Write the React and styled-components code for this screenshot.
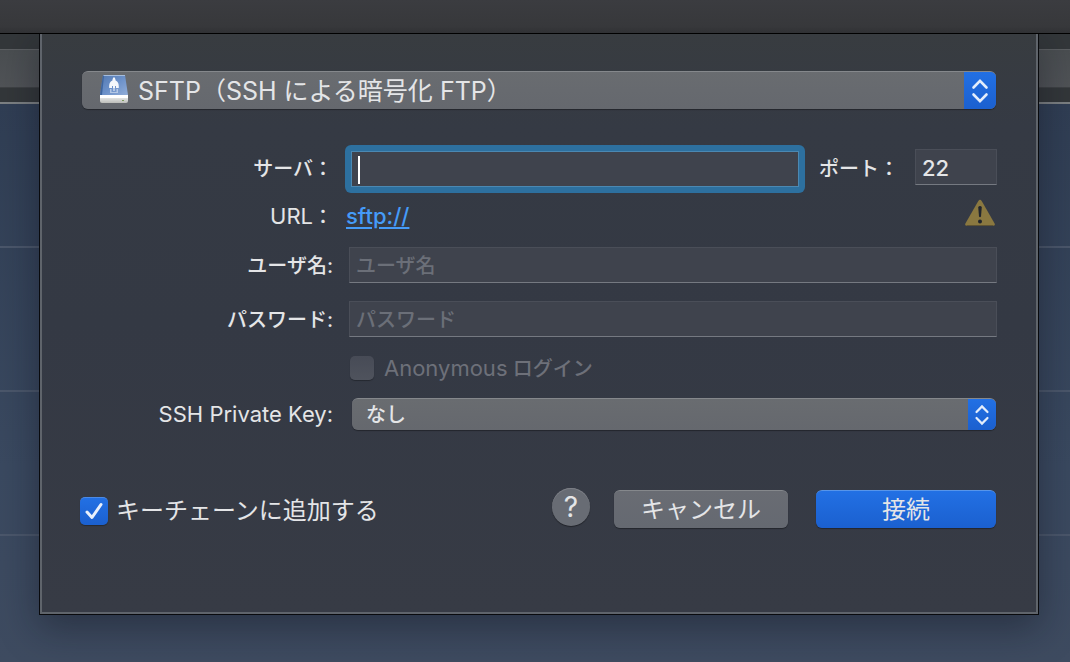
import React, { useState } from "react";
import styled, { createGlobalStyle } from "styled-components";

const GlobalStyle = createGlobalStyle`
  *, *::before, *::after { box-sizing: border-box; }
  body {
    margin: 0;
    background: #3b485c;
    color: #e4e5e7;
    font-family: Inter, "Noto Sans CJK JP", sans-serif;
    font-size: 20px;
    line-height: 24px;
  }
  input, select, button { font: inherit; color: inherit; margin: 0; }
`;

const Window = styled.div`
  min-height: 100vh;
  display: flex;
  flex-direction: column;
`;

const TitleBar = styled.header`
  height: 34px;
  background: linear-gradient(#3b3c40, #37383b 80%, #303134);
  border-bottom: 1px solid #000;
`;

const Stage = styled.main`
  flex: 1;
  display: grid;
  grid-template-columns: minmax(0, 1fr);
  overflow: hidden;

  > * { grid-area: 1 / 1; }
`;

const Browser = styled.div`
  display: flex;
  flex-direction: column;
`;

const ToolStrip = styled.div`
  height: 70px;
  padding: 15px 0 13px;
  background: #33373a;
  border-bottom: 2px solid #7c8083;
`;

const ToolBand = styled.div`
  height: 39px;
  background: linear-gradient(#4a4e51, #505357);
  border-top: 1px solid #5c5f62;
  border-bottom: 1px solid #3e4144;
`;

const FileList = styled.div`
  flex: 1;
  background: linear-gradient(#303e54, #3a4960 65%, #3e4b60);
`;

const FileRow = styled.div`
  height: 144px;
  border-bottom: 2px solid #4b576b;
`;

const Sheet = styled.form`
  position: relative;
  align-self: start;
  margin: 0 32px 48px 40px;
  padding: 37px 40px 84px;
  background: linear-gradient(#383c40, #353a44 16%, #343944 50%, #373b45);
  border: 2px solid #5f646b;
  border-top: 0;
  outline: 1px solid #090a0d;
  box-shadow: 0 12px 36px 2px rgba(12, 16, 26, 0.4);
`;

const SelectBox = styled.div`
  flex: 1;
  display: flex;
  align-items: center;
  height: ${(p) => (p.$large ? 38 : 32)}px;
  padding-left: ${(p) => (p.$large ? 18 : 14)}px;
  margin: ${(p) => (p.$large ? "0" : "0 1px 0 7px")};
  border-radius: 6px;
  overflow: hidden;
  background: linear-gradient(#696c70, #65686e);
  border-top: 1px solid #85888c;
  box-shadow: 0 1px 1px rgba(0, 0, 0, 0.35);
  font-size: ${(p) => (p.$large ? 25 : 20)}px;
  font-weight: ${(p) => (p.$large ? 400 : 500)};
  line-height: ${(p) => (p.$large ? 36 : 28)}px;
`;

const Select = styled.select`
  flex: 1;
  min-width: 0;
  padding: 0;
  border: 0;
  outline: 0;
  appearance: none;
  background: transparent;
`;

const SelectCap = styled.span`
  display: flex;
  align-items: center;
  justify-content: center;
  align-self: stretch;
  width: ${(p) => (p.$large ? 32 : 28)}px;
  margin-top: -1px;
  background: linear-gradient(#2270e4, #1b60cf);
  border-top: 1px solid #5795ea;
  pointer-events: none;
`;

const DriveSlot = styled.span`
  display: flex;
  margin: 0 10px 3px 0;
`;

const Fields = styled.div`
  display: grid;
  grid-template-columns: 251px minmax(0, 1fr);
  column-gap: 12px;
  align-items: center;
  margin: 36px -1px 0 0;
  font-weight: 500;
`;

const Label = styled.label`
  justify-self: end;
  white-space: nowrap;
`;

const FieldLabel = styled(Label)`
  padding-top: 2px;
`;

const Latin = styled.span`
  font-size: 22px;
  font-weight: 400;
`;

const Line = styled.div`
  display: flex;
  align-items: center;
  height: ${(p) => p.$height}px;
  padding-left: ${(p) => p.$inset || 0}px;
`;

const FocusRing = styled.div`
  position: relative;
  flex: 1;
  min-width: 0;
  height: 48px;
  padding: 6px;
  background: #2d709f;
  border-radius: 6px;
`;

const Caret = styled.span`
  position: absolute;
  left: 13px;
  top: 11px;
  width: 2px;
  height: 28px;
  background: #fff;
`;

const TextInput = styled.input`
  width: 100%;
  height: 36px;
  padding: 2px 6px 0;
  border: 1px solid #4a4e58;
  border-bottom: 1px solid #757981;
  border-radius: 0;
  outline: 0;
  background: #3f434d;

  &::placeholder { color: #6b6f78; opacity: 1; }
`;

const ServerInput = styled(TextInput)`
  display: block;
  border: 1px solid #4b88b2;
`;

const PortLabel = styled.label`
  margin-left: 14px;
  white-space: nowrap;
`;

const PortInput = styled(TextInput)`
  align-self: flex-start;
  width: 82px;
  margin: 4px 0 0 16px;
  font-size: 22px;
`;

const UrlLink = styled.a`
  margin-left: 1px;
  color: #459bf8;
  font-size: 22px;
  text-underline-offset: 3px;
  text-decoration-thickness: 2px;
`;

const WarningSlot = styled.span`
  display: flex;
  align-self: flex-start;
  margin: 6px 2px 0 auto;
`;

const CheckLabel = styled.label`
  display: flex;
  align-items: center;
  gap: ${(p) => (p.$large ? 8 : 10)}px;
  padding-top: ${(p) => (p.$large ? 4 : 0)}px;
  font-size: ${(p) => (p.$large ? 24 : 20)}px;
  white-space: nowrap;
  color: ${(p) => (p.$dim ? "#6d7079" : "inherit")};
`;

const Check = styled.input`
  appearance: none;
  flex: none;
  width: ${(p) => (p.$large ? 28 : 24)}px;
  height: ${(p) => (p.$large ? 28 : 24)}px;
  border-radius: 5px;
  background: linear-gradient(#474b56, #4f535d);
  box-shadow: 0 1px 1px rgba(0, 0, 0, 0.3);

  &:checked {
    background: linear-gradient(#2270e4, #1b60cf);
    border-top: 1px solid #4c8ae6;
  }
`;

const CheckFrame = styled.span`
  display: grid;
  place-items: center;
  > * { grid-area: 1 / 1; }
  svg { pointer-events: none; }
`;

const Footer = styled.footer`
  display: flex;
  align-items: center;
  margin: 51px 0 0 -2px;
`;

const Button = styled.button`
  height: 38px;
  width: ${(p) => (p.$primary ? 180 : 174)}px;
  margin-left: ${(p) => (p.$primary ? 28 : 24)}px;
  padding: 0;
  border: 0;
  border-top: 1px solid ${(p) => (p.$primary ? "#5795ea" : "#85888c")};
  border-radius: 6px;
  background: ${(p) =>
    p.$primary ? "linear-gradient(#2270e4, #1b60cf)" : "linear-gradient(#696c73, #656971)"};
  box-shadow: 0 1px 1px rgba(0, 0, 0, 0.35);
  font-size: 24px;
`;

const HelpButton = styled.button`
  width: 38px;
  height: 38px;
  margin: -4px 0 0 auto;
  padding: 0;
  border: 0;
  border-radius: 50%;
  background: #686c74;
  box-shadow: 0 1px 1px rgba(0, 0, 0, 0.4), inset 0 1px 0 #7c7f86;
  font-size: 28px;
`;

function Chevrons({ large }) {
  return (
    <svg width={large ? 18 : 16} height={large ? 26 : 22} viewBox="0 0 18 26" fill="none"
      stroke="#e3edfb" strokeWidth="2.6" strokeLinecap="round" strokeLinejoin="miter" aria-hidden="true">
      <path d="M2.500 9.500 9 2.800l6.500 6.700M2.500 16.500 9 23.200l6.500-6.700" />
    </svg>
  );
}

function DriveIcon() {
  return (
    <svg width="28" height="28" viewBox="0 1 28 28" aria-hidden="true">
      <defs>
        <linearGradient id="driveTop" x1="0" y1="0" x2="1" y2="1">
          <stop offset="0" stopColor="#5278b0" />
          <stop offset="0.5" stopColor="#6c91c9" />
          <stop offset="1" stopColor="#94afd9" />
        </linearGradient>
        <linearGradient id="driveFront" x1="0" y1="0" x2="0" y2="1">
          <stop offset="0" stopColor="#fafafa" />
          <stop offset="1" stopColor="#bcbdb9" />
        </linearGradient>
      </defs>
      <path d="M3 1h22l3 20v1H0v-1z" fill="url(#driveTop)" />
      <path d="M3 1h22v1H3z" fill="#a5bddd" />
      <path d="M3 1 0 21h2L4 2z" fill="#3e659e" />
      <path d="M14 3c1 1 1.500 2 1.600 3.500C18 7.500 19 9.500 18.800 14H16v-2h-1v2h-2v-2h-1v2H9.200C9 9.500 10 7.500 12.400 6.500 12.500 5 13 4 14 3z" fill="#f4f7fb" />
      <path d="M10 15h1.500v3h5v-3H18v4h-8zM13 14h2v3h-2z" fill="#d5e0f1" opacity=".65" />
      <path d="M0 21h28v6q0 2-2 2H2q-2 0-2-2z" fill="url(#driveFront)" />
      <path d="M0 21h28v3H0z" fill="#fff" />
      <path d="M22 26h2v1h-2z" fill="#7b995c" />
    </svg>
  );
}

function WarningIcon() {
  return (
    <svg width="30" height="28" viewBox="0 0 30 28" role="img" aria-label="警告">
      <path d="M13.300 2q1.700-2.600 3.400 0L29.600 24.500q.8 2.500-1.500 2.500H1.900Q-.4 27 .4 24.500z" fill="#8a7840" />
      <path d="M1.500 26.500h27" stroke="#5e5334" strokeWidth="1" />
      <path d="M13.200 8q1.800-1.800 3.600 0l-.8 9.500q-1 1.400-2 0z" fill="#21252d" />
      <circle cx="15" cy="22.500" r="2" fill="#21252d" />
    </svg>
  );
}

export default function App() {
  const [saved, setSaved] = useState(true);
  return (
    <>
      <GlobalStyle />
      <Window>
        <TitleBar />
        <Stage>
          <Browser aria-hidden="true">
            <ToolStrip><ToolBand /></ToolStrip>
            <FileList>
              <FileRow />
              <FileRow />
              <FileRow />
            </FileList>
          </Browser>

          <Sheet onSubmit={(e) => e.preventDefault()}>
            <SelectBox $large>
              <DriveSlot><DriveIcon /></DriveSlot>
              <Select aria-label="プロトコル">
                <option>SFTP（SSH による暗号化 FTP）</option>
              </Select>
              <SelectCap $large><Chevrons large /></SelectCap>
            </SelectBox>

            <Fields>
              <Label htmlFor="server">サーバ：</Label>
              <Line $height={48}>
                <FocusRing>
                  <ServerInput id="server" type="text" />
                  <Caret />
                </FocusRing>
                <PortLabel htmlFor="port">ポート：</PortLabel>
                <PortInput id="port" type="text" defaultValue="22" />
              </Line>

              <Label as="span"><Latin>URL</Latin>：</Label>
              <Line $height={46}>
                <UrlLink href="sftp://">sftp://</UrlLink>
                <WarningSlot><WarningIcon /></WarningSlot>
              </Line>

              <FieldLabel htmlFor="user">ユーザ名:</FieldLabel>
              <Line $height={52} $inset={4}>
                <TextInput id="user" type="text" placeholder="ユーザ名" />
              </Line>

              <FieldLabel htmlFor="password">パスワード:</FieldLabel>
              <Line $height={56} $inset={4}>
                <TextInput id="password" type="password" placeholder="パスワード" />
              </Line>

              <span />
              <Line $height={42} $inset={5}>
                <CheckLabel $dim>
                  <Check type="checkbox" disabled />
                  <span><Latin>Anonymous</Latin> ログイン</span>
                </CheckLabel>
              </Line>

              <Label htmlFor="key"><Latin>SSH Private Key:</Latin></Label>
              <Line $height={50}>
                <SelectBox>
                  <Select id="key">
                    <option>なし</option>
                  </Select>
                  <SelectCap><Chevrons /></SelectCap>
                </SelectBox>
              </Line>
            </Fields>

            <Footer>
              <CheckLabel $large>
                <CheckFrame>
                  <Check $large type="checkbox" checked={saved} onChange={(e) => setSaved(e.target.checked)} />
                  {saved && (
                    <svg width="20" height="20" viewBox="0 0 20 20" fill="none" stroke="#e8f0fc"
                      strokeWidth="3" strokeLinecap="round" strokeLinejoin="round" aria-hidden="true">
                      <path d="M3 11l5 5.500L17 3.500" />
                    </svg>
                  )}
                </CheckFrame>
                キーチェーンに追加する
              </CheckLabel>
              <HelpButton type="button" aria-label="ヘルプ">?</HelpButton>
              <Button type="button">キャンセル</Button>
              <Button type="submit" $primary>接続</Button>
            </Footer>
          </Sheet>
        </Stage>
      </Window>
    </>
  );
}
